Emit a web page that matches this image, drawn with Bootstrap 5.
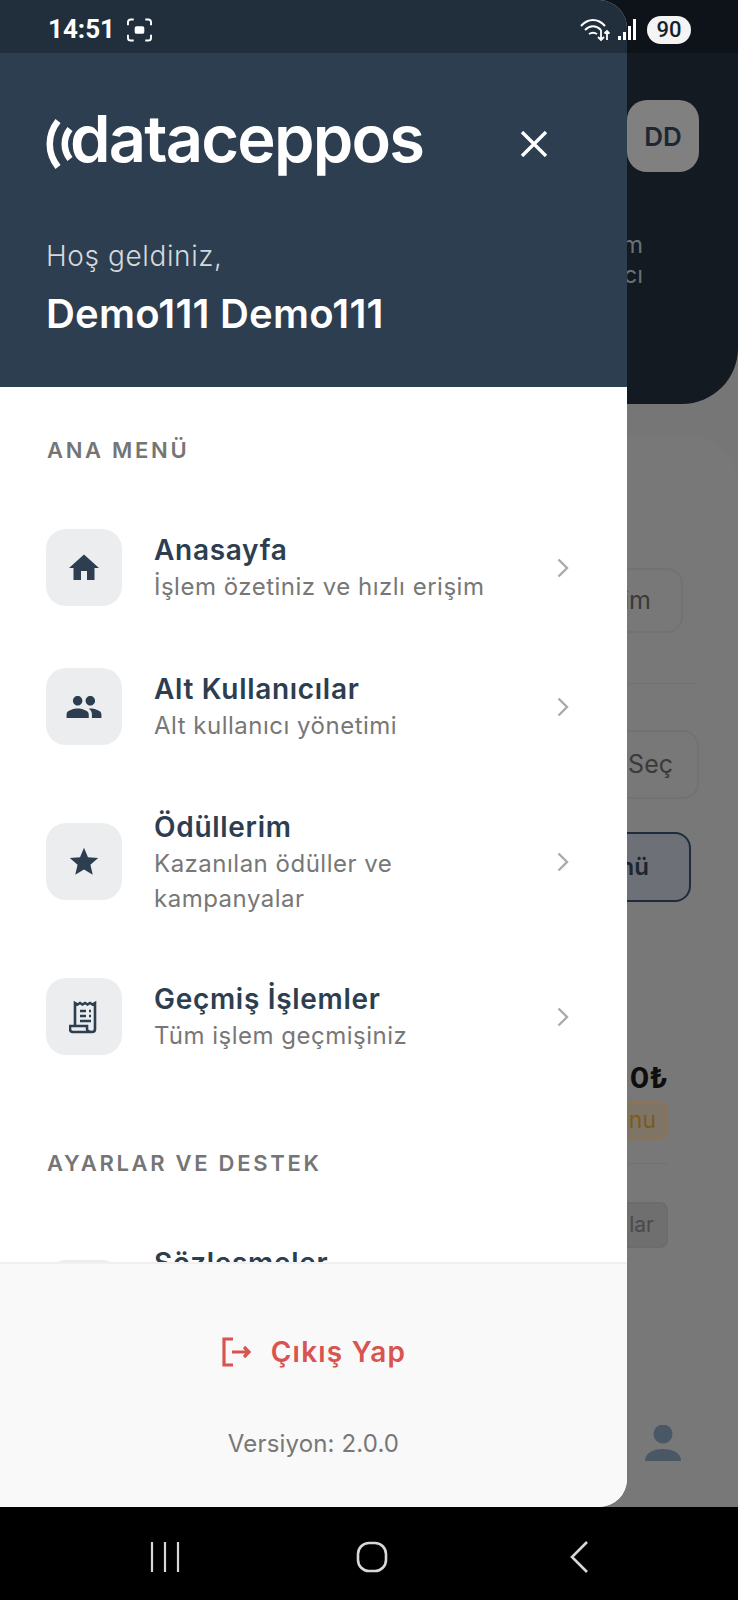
<!DOCTYPE html>
<html lang="tr">
<head>
<meta charset="UTF-8">
<meta name="viewport" content="width=device-width, initial-scale=1.0">
<title>dataceppos</title>
<link rel="stylesheet" href="https://cdn.jsdelivr.net/npm/bootstrap@5.3.0/dist/css/bootstrap.min.css">
<style>
    body { margin: 0; background: #000; font-family: Inter, "Noto Sans", sans-serif; }
    .phone { position: relative; width: 738px; height: 1600px; overflow: hidden; background: #000; }

    /* arka plandaki sayfa */
    .back-page { height: 1507px; background: #767676; overflow: hidden; }
    .back-head { height: 404px; padding: 100px 39px 0 0; background: #131a22; border-bottom-right-radius: 56px; }
    .back-avatar { width: 72px; height: 72px; border-radius: 20px; background: #808080; color: #1c2733; font-size: 26px; font-weight: 600; }
    .back-note { margin: 58px 56px 0 0; color: #6c7075; font-size: 24px; line-height: 30px; text-align: right; }
    .back-panel { height: 1072px; margin-top: 31px; padding-top: 133px; background: #787878; border-top-right-radius: 50px; }
    .back-btn { height: 65px; padding: 0 19px 0 0; border: 2px solid #727272; border-radius: 16px; color: #3a3a3a; font-size: 24px; }
    .back-rule { width: 697px; margin: 50px 0 46px; border-top: 1px solid #717171; }
    .back-select { width: 200px; height: 69px; margin-right: 39px; padding-right: 24px; font-size: 25px; }
    .back-primary { width: 200px; height: 70px; margin: 33px 47px 0 0; padding-right: 40px; background: #6d7076; border-color: #1f2c3b; color: #1d2530; font-size: 24px; font-weight: 600; }
    .back-first { width: 200px; margin-right: 55px; padding-right: 30px; font-size: 25px; }
    .back-price { margin: 158px 70px 0 0; color: #0e0e0e; font-size: 29px; font-weight: 700; line-height: 36px; }
    .back-tag { width: 200px; height: 37px; margin: 6px 70px 0 0; padding-right: 10px; border: 2px solid #8f7350; border-radius: 8px; background: #7e7567; color: #7c5a1e; font-size: 23px; }
    .back-rule-sm { width: 668px; margin: 24px 0 38px; border-top: 1px solid #717171; }
    .back-chip { width: 200px; height: 46px; margin-right: 70px; padding-right: 12px; border: 2px solid #6c6c6c; border-radius: 8px; background: #6f6f6f; color: #4a4a4a; font-size: 21px; }
    .back-person { margin: 177px 56px 0 0; }

    /* yan menu */
    .side-drawer { position: absolute; top: 0; left: 0; width: 627px; height: 1507px; overflow: hidden; background: #fff; border-radius: 0 28px 28px 0; }
    .drawer-head { height: 387px; padding: 113px 46px 0 46px; background: #2c3e50; color: #fff; }
    .logo-row { height: 62px; }
    .logo-text { margin: -11px 0 0 -3px; color: #fff; font-size: 65px; font-weight: 600; letter-spacing: -1.8px; line-height: 62px; }
    .close-x { margin: 0 33px 0 auto; }
    .welcome { margin: 59px 0 0 0; color: #d5d9dd; font-size: 28px; font-weight: 300; letter-spacing: .6px; line-height: 44px; }
    .user-name { margin: 12px 0 0 0; font-size: 40px; font-weight: 600; letter-spacing: .2px; line-height: 48px; }
    .drawer-scroll { overflow: hidden; padding: 0 46px; }
    .menu-label { margin: 48px 0 33px 1px; color: #757575; font-size: 22px; font-weight: 600; letter-spacing: 2.7px; line-height: 30px; }
    .menu-label.next { margin-top: 62px; margin-bottom: 34px; }
    .menu-row { padding: 31px 0; border: 0; }
    .menu-box { flex: 0 0 76px; height: 77px; border-radius: 20px; background: #ebedef; }
    .menu-text { flex: 1 1 auto; max-width: 360px; margin-left: 32px; }
    .menu-text.tall { min-height: 110px; }
    .menu-title { color: #2c3e50; font-size: 28px; font-weight: 600; letter-spacing: .7px; line-height: 40px; }
    .menu-sub { color: #777; font-size: 24px; letter-spacing: .5px; line-height: 34.5px; }
    .menu-chev { margin: 0 12px 0 auto; }
    .drawer-foot { position: absolute; left: 0; right: 0; bottom: 0; height: 245px; padding-top: 65px; background: #f9f9f9; border-top: 2px solid #f0f0f0; }
    .logout-link { padding: 0; border: 0; color: #d9534f; font-size: 28px; font-weight: 600; letter-spacing: 1.2px; line-height: 46px; }
    .logout-gap { gap: 20px; }
    .version-text { margin-top: 51px; color: #777; font-size: 24px; letter-spacing: .15px; line-height: 36px; }

    /* telefon cubuklari */
    .status-strip { position: absolute; top: 0; left: 0; right: 0; height: 53px; padding: 6px 47px 0 48px; background: rgba(0, 0, 0, .25); color: #fff; }
    .status-time { margin-right: 12px; font-family: Roboto, sans-serif; font-size: 26px; font-weight: 700; }
    .batt-pill { width: 44px; height: 28px; margin-left: 10px; border-radius: 14px; background: #f4f4f4; color: #16202a; font-family: Roboto, sans-serif; font-size: 22px; font-weight: 500; }
    .nav-strip { height: 93px; padding: 6px 0 0 6px; background: #000; }
    .nav-cell { width: 207px; }
</style>
</head>
<body>
<div class="phone">

    <!-- menu arkasinda kalan sayfa -->
    <div class="back-page">
        <div class="back-head">
            <div class="d-flex justify-content-end">
                <div class="back-avatar d-flex align-items-center justify-content-center">DD</div>
            </div>
            <div class="back-note">m<br>cı</div>
        </div>
        <div class="back-panel">
            <div class="d-flex justify-content-end">
                <div class="back-btn back-first d-flex align-items-center justify-content-end">im</div>
            </div>
            <div class="back-rule"></div>
            <div class="d-flex justify-content-end">
                <div class="back-btn back-select d-flex align-items-center justify-content-end">Seç</div>
            </div>
            <div class="d-flex justify-content-end">
                <div class="back-btn back-primary d-flex align-items-center justify-content-end">nü</div>
            </div>
            <div class="back-price text-end">0₺</div>
            <div class="d-flex justify-content-end">
                <div class="back-tag d-flex align-items-center justify-content-end">nu</div>
            </div>
            <div class="back-rule-sm"></div>
            <div class="d-flex justify-content-end">
                <div class="back-chip d-flex align-items-center justify-content-end">lar</div>
            </div>
            <div class="back-person d-flex justify-content-end">
                <svg width="38" height="36" viewBox="0 0 38 36" fill="#4a5866"><ellipse cx="19" cy="9" rx="9.5" ry="9.5"/><path d="M1 36c0-8 8-12 18-12s18 4 18 12z"/></svg>
            </div>
        </div>
    </div>

    <!-- yan menu -->
    <div class="side-drawer d-flex flex-column">
        <div class="drawer-head flex-shrink-0">
            <div class="logo-row d-flex align-items-center">
                <svg width="27" height="52" viewBox="0 0 27 52" fill="none" stroke="#fff" stroke-width="6.500"><path d="M12 3C1 17 1 35 12 49"/><path d="M24 11C17 20 17 32 24 41"/></svg>
                <span class="logo-text">dataceppos</span>
                <svg class="close-x" width="28" height="26" viewBox="0 0 28 26" stroke="#fff" stroke-width="3.4" fill="none"><path d="M2 1l24 24M26 1L2 25"/></svg>
            </div>
            <div class="welcome">Hoş geldiniz,</div>
            <div class="user-name">Demo111 Demo111</div>
        </div>

        <div class="drawer-scroll flex-grow-1">
            <div class="menu-label">ANA MENÜ</div>
            <div class="list-group list-group-flush">
                <a href="#" class="list-group-item menu-row d-flex align-items-center">
                    <span class="menu-box d-flex align-items-center justify-content-center">
                        <svg width="36" height="36" viewBox="0 0 24 24" fill="#2c3e50"><path d="M10 20v-6h4v6h5v-8h3L12 3 2 12h3v8z"/></svg>
                    </span>
                    <span class="menu-text">
                        <span class="menu-title d-block">Anasayfa</span>
                        <span class="menu-sub d-block">İşlem özetiniz ve hızlı erişim</span>
                    </span>
                    <svg class="menu-chev" width="12" height="20" viewBox="0 0 12 20" fill="none" stroke="#aaa" stroke-width="2.4"><path d="M1.5 1.5L10 10l-8.500 8.500"/></svg>
                </a>
                <a href="#" class="list-group-item menu-row d-flex align-items-center">
                    <span class="menu-box d-flex align-items-center justify-content-center">
                        <svg width="38" height="38" viewBox="0 0 24 24" fill="#2c3e50"><path d="M16 11c1.660 0 2.990-1.340 2.990-3S17.660 5 16 5c-1.660 0-3 1.340-3 3s1.340 3 3 3zm-8 0c1.660 0 2.990-1.340 2.990-3S9.660 5 8 5C6.340 5 5 6.340 5 8s1.340 3 3 3zm0 2c-2.330 0-7 1.170-7 3.500V19h14v-2.500c0-2.330-4.670-3.500-7-3.500zm8 0c-.29 0-.62.02-.97.05 1.160.84 1.970 1.970 1.970 3.450V19h6v-2.500c0-2.330-4.670-3.500-7-3.500z"/></svg>
                    </span>
                    <span class="menu-text">
                        <span class="menu-title d-block">Alt Kullanıcılar</span>
                        <span class="menu-sub d-block">Alt kullanıcı yönetimi</span>
                    </span>
                    <svg class="menu-chev" width="12" height="20" viewBox="0 0 12 20" fill="none" stroke="#aaa" stroke-width="2.4"><path d="M1.5 1.5L10 10l-8.500 8.500"/></svg>
                </a>
                <a href="#" class="list-group-item menu-row d-flex align-items-center">
                    <span class="menu-box d-flex align-items-center justify-content-center">
                        <svg width="34" height="34" viewBox="0 0 24 24" fill="#2c3e50"><path d="M12 17.270L18.180 21l-1.640-7.030L22 9.240l-7.190-.61L12 2 9.190 8.630 2 9.240l5.460 4.730L5.820 21z"/></svg>
                    </span>
                    <span class="menu-text">
                        <span class="menu-title d-block">Ödüllerim</span>
                        <span class="menu-sub d-block">Kazanılan ödüller ve kampanyalar</span>
                    </span>
                    <svg class="menu-chev" width="12" height="20" viewBox="0 0 12 20" fill="none" stroke="#aaa" stroke-width="2.4"><path d="M1.5 1.5L10 10l-8.500 8.500"/></svg>
                </a>
                <a href="#" class="list-group-item menu-row d-flex align-items-center">
                    <span class="menu-box d-flex align-items-center justify-content-center">
                        <svg width="30" height="34" viewBox="0 0 30 34" fill="none" stroke="#2c3e50" stroke-width="2.600"><path d="M6 26V3l2.500 1.500L11 3l2.500 1.500L16 3l2.500 1.500L21 3l2.500 1.500L26 3v26c0 2-1 3-3 3H4c-2 0-3-1-3-3v-3h17v3c0 2 2 3 5 3"/><path d="M11 11h6M20 11h2M11 16h6M20 16h2M11 21h11"/></svg>
                    </span>
                    <span class="menu-text">
                        <span class="menu-title d-block">Geçmiş İşlemler</span>
                        <span class="menu-sub d-block">Tüm işlem geçmişiniz</span>
                    </span>
                    <svg class="menu-chev" width="12" height="20" viewBox="0 0 12 20" fill="none" stroke="#aaa" stroke-width="2.4"><path d="M1.5 1.5L10 10l-8.500 8.500"/></svg>
                </a>
            </div>
            <div class="menu-label next">AYARLAR VE DESTEK</div>
            <div class="list-group list-group-flush">
                <a href="#" class="list-group-item menu-row d-flex align-items-center">
                    <span class="menu-box"></span>
                    <span class="menu-text tall">
                        <span class="menu-title d-block">Sözleşmeler</span>
                    </span>
                </a>
            </div>
        </div>

        <div class="drawer-foot d-flex flex-column align-items-center">
            <a href="#" class="btn logout-link d-flex align-items-center logout-gap">
                <svg width="30" height="30" viewBox="0 0 30 30" fill="none" stroke="#d9534f" stroke-width="3.200"><path d="M12 2H3v26h9"/><path d="M11 15h17M23 10l5 5-5 5"/></svg>
                Çıkış Yap
            </a>
            <div class="version-text">Versiyon: 2.0.0</div>
        </div>
    </div>

    <!-- durum cubugu -->
    <div class="status-strip d-flex align-items-center">
        <span class="status-time">14:51</span>
        <svg width="25" height="24" viewBox="0 0 26 24" fill="none" stroke="#fff" stroke-width="2"><path d="M1 7V4c0-2 1-3 3-3h3M19 1h3c2 0 3 1 3 3v3M25 17v3c0 2-1 3-3 3h-3M7 23H4c-2 0-3-1-3-3v-3"/><rect x="8" y="8" width="10" height="8" rx="2" fill="#fff" stroke="none"/></svg>
        <span class="ms-auto d-flex align-items-center">
            <svg width="30" height="24" viewBox="0 0 30 24" fill="none" stroke="#fff" stroke-width="2"><path d="M1 8c7-8 17-8 24 0M5 12c5-5 11-5 16 0M9 16c3-2 5-2 8 0"/><path d="M21 12v10M18 19l3 3 3-3M27 22V13M24.500 15.500L27 13l2.500 2.500" stroke-width="1.800"/></svg>
            <svg class="ms-2" width="19" height="21" viewBox="0 0 19 21" fill="#fff"><rect x="0" y="17" width="3" height="4"/><rect x="5" y="13" width="3" height="8"/><rect x="10" y="7" width="3" height="14"/><rect x="15" y="0" width="3" height="21"/></svg>
            <span class="batt-pill d-flex align-items-center justify-content-center">90</span>
        </span>
    </div>

    <!-- alt gezinme cubugu -->
    <div class="nav-strip d-flex align-items-center justify-content-center">
        <span class="nav-cell d-flex justify-content-center">
            <svg width="30" height="30" viewBox="0 0 30 30" stroke="#d8d8d8" stroke-width="2.200"><path d="M2 0v30M15 0v30M28 0v30"/></svg>
        </span>
        <span class="nav-cell d-flex justify-content-center">
            <svg width="32" height="32" viewBox="0 0 32 32" fill="none" stroke="#d8d8d8" stroke-width="2.600"><rect x="2" y="2" width="28" height="28" rx="11"/></svg>
        </span>
        <span class="nav-cell d-flex justify-content-center">
            <svg width="20" height="32" viewBox="0 0 20 32" fill="none" stroke="#d8d8d8" stroke-width="2.600"><path d="M18 1L3 16l15 15"/></svg>
        </span>
    </div>
</div>
<script src="https://cdn.jsdelivr.net/npm/bootstrap@5.3.0/dist/js/bootstrap.bundle.min.js"></script>
</body>
</html>
